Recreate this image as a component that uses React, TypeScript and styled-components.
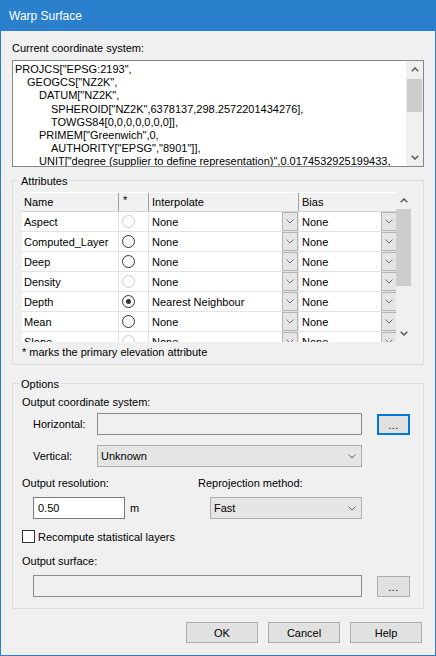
import React from "react";
import styled, { createGlobalStyle } from "styled-components";

const GlobalStyle = createGlobalStyle`
  * { box-sizing: border-box; }
  html, body { margin: 0; padding: 0; background: #f0f0f0; }
  body {
    font-family: "Liberation Sans", Arial, sans-serif;
    font-size: 11px;
    color: #000;
  }
`;

const Window = styled.div`
  width: 436px;
  height: 656px;
  background: #f0f0f0;
  border: 1px solid #2b80cd;
  border-top: none;
  display: flex;
  flex-direction: column;
  overflow: hidden;
`;

const TitleBar = styled.div`
  height: 31px;
  flex: none;
  background: #2b80cd;
  color: #fff;
  font-size: 12px;
  display: flex;
  align-items: center;
  padding-left: 8px;
`;

const Body = styled.div`
  padding: 0 11px;
  display: flex;
  flex-direction: column;
`;

const Label = styled.div<{ $mt?: number }>`
  line-height: 14px;
  height: 14px;
  margin-top: ${(p) => p.$mt ?? 0}px;
  white-space: nowrap;
`;

/* ---------- multi-line text box ---------- */
const TextBox = styled.div`
  margin-top: 5px;
  height: 107px;
  border: 1px solid #828790;
  background: #fff;
  display: flex;
`;

const TextLines = styled.div`
  flex: 1;
  padding: 2px 0 0 2px;
  line-height: 13.2px;
  overflow: hidden;
  white-space: nowrap;
`;

const TextLine = styled.div<{ $level: number }>`
  padding-left: ${(p) => p.$level * 12}px;
`;

const VScroll = styled.div<{ $w: number }>`
  width: ${(p) => p.$w}px;
  flex: none;
  background: #f0f0f0;
  display: flex;
  flex-direction: column;
`;

const ScrollArrow = styled.div`
  height: 17px;
  flex: none;
  display: flex;
  align-items: center;
  justify-content: center;
`;

const ScrollTrack = styled.div<{ $offset: number }>`
  flex: 1;
  padding-top: ${(p) => p.$offset}px;
  display: flex;
  flex-direction: column;
`;

const Thumb = styled.div<{ $h: number; $ml: number }>`
  height: ${(p) => p.$h}px;
  margin-left: ${(p) => p.$ml}px;
  width: 15px;
  background: #cdcdcd;
`;

/* ---------- group boxes ---------- */
const Group = styled.div<{ $mt: number; $pad: string }>`
  position: relative;
  margin-top: ${(p) => p.$mt}px;
  border: 1px solid #dcdcdc;
  padding: ${(p) => p.$pad};
  display: flex;
  flex-direction: column;
`;

const Caption = styled.span`
  position: absolute;
  top: -7px;
  left: 6px;
  padding: 0 2px;
  line-height: 14px;
  background: #f0f0f0;
`;

/* ---------- data grid ---------- */
const Grid = styled.div`
  display: flex;
  height: 150px;
`;

const Table = styled.div`
  width: 374px;
  overflow: hidden;
  background: #fff;
`;

const COLS = "97px 30px 150px 99px";

const HeaderRow = styled.div`
  display: grid;
  grid-template-columns: ${COLS};
  height: 20px;
  background: #f0f0f0;
  border-top: 1px solid #fff;
  border-bottom: 1px solid #d5d5d5;
`;

const HeaderCell = styled.div<{ $last?: boolean; $pad: number; $top?: boolean }>`
  border-right: 1px solid ${(p) => (p.$last ? "#ffffff" : "#a0a0a0")};
  padding-left: ${(p) => p.$pad}px;
  display: flex;
  align-items: ${(p) => (p.$top ? "flex-start" : "center")};
  padding-top: ${(p) => (p.$top ? 1 : 0)}px;
`;

const Row = styled.div`
  display: grid;
  grid-template-columns: ${COLS};
  height: 20px;
  flex: none;
`;

const Cell = styled.div<{ $pad: number }>`
  border-right: 1px solid #e3e3e3;
  border-bottom: 1px solid #e3e3e3;
  padding-left: ${(p) => p.$pad}px;
  display: flex;
  align-items: center;
  justify-content: space-between;
  white-space: nowrap;
  overflow: hidden;
`;

const CellDrop = styled.div`
  width: 16px;
  height: 100%;
  flex: none;
  border: 1px solid #b4b4b4;
  background: #e5e5e5;
  display: flex;
  align-items: center;
  justify-content: center;
`;

const Radio = styled.span<{ $disabled?: boolean; $checked?: boolean }>`
  width: 13px;
  height: 13px;
  border-radius: 50%;
  border: 1px solid ${(p) => (p.$disabled ? "#cccccc" : "#333333")};
  background: #fff;
  display: flex;
  align-items: center;
  justify-content: center;
  &::after {
    content: "";
    width: 5px;
    height: 5px;
    border-radius: 50%;
    background: #333;
    display: ${(p) => (p.$checked ? "block" : "none")};
  }
`;

/* ---------- form controls ---------- */
const FieldRow = styled.div<{ $mt: number; $indent: number }>`
  display: flex;
  align-items: center;
  margin-top: ${(p) => p.$mt}px;
  padding-left: ${(p) => p.$indent}px;
`;

const FieldLabel = styled.span`
  width: 64px;
  flex: none;
`;

const TextInput = styled.div<{ $w: number; $readonly?: boolean }>`
  width: ${(p) => p.$w}px;
  height: 22px;
  flex: none;
  border: 1px solid ${(p) => (p.$readonly ? "#8a8a8a" : "#7a7a7a")};
  background: ${(p) => (p.$readonly ? "#f0f0f0" : "#ffffff")};
  display: flex;
  align-items: center;
  padding-left: 4px;
`;

const Combo = styled.div<{ $w: number; $ml?: number }>`
  width: ${(p) => p.$w}px;
  height: 22px;
  flex: none;
  margin-left: ${(p) => p.$ml ?? 0}px;
  border: 1px solid #acacac;
  background: #e5e5e5;
  display: flex;
  align-items: center;
  justify-content: space-between;
  padding: 0 5px 0 3px;
`;

const DotsButton = styled.div<{ $focused?: boolean }>`
  width: 33px;
  height: 21px;
  flex: none;
  margin-left: 15px;
  border: ${(p) => (p.$focused ? "2px solid #0078d7" : "1px solid #adadad")};
  background: #e1e1e1;
  display: flex;
  align-items: center;
  justify-content: center;
  padding-top: 2px;
  letter-spacing: 0.5px;
`;

const TwoCols = styled.div`
  display: grid;
  grid-template-columns: 176px 1fr;
  margin-top: 9px;
`;

const Col = styled.div`
  display: flex;
  flex-direction: column;
`;

const Unit = styled.span`
  margin-left: 5px;
`;

const CheckRow = styled.label`
  display: flex;
  align-items: center;
  margin-top: 11px;
  height: 13px;
`;

const CheckBox = styled.span`
  width: 13px;
  height: 13px;
  border: 1px solid #333;
  background: #fff;
  margin-right: 3px;
`;

const ButtonBar = styled.div`
  display: flex;
  justify-content: flex-end;
  gap: 10px;
  margin-top: 13px;
  padding-right: 2px;
`;

const Button = styled.div`
  width: 72px;
  height: 21px;
  border: 1px solid #adadad;
  background: #e1e1e1;
  display: flex;
  align-items: center;
  justify-content: center;
`;

/* ---------- icons ---------- */
const ChevronDown = ({ color = "#606060" }: { color?: string }) => (
  <svg width="8" height="5" viewBox="0 0 8 5">
    <polyline points="0.5,0.5 4,4 7.5,0.5" fill="none" stroke={color} strokeWidth="1" />
  </svg>
);

const ScrollUp = () => (
  <svg width="8" height="5" viewBox="0 0 8 5">
    <polyline points="0.7,4.3 4,1 7.3,4.3" fill="none" stroke="#606060" strokeWidth="1.6" />
  </svg>
);

const ScrollDown = () => (
  <svg width="8" height="5" viewBox="0 0 8 5">
    <polyline points="0.7,0.7 4,4 7.3,0.7" fill="none" stroke="#606060" strokeWidth="1.6" />
  </svg>
);

/* ---------- data ---------- */
const wkt: [number, string][] = [
  [0, 'PROJCS["EPSG:2193",'],
  [1, 'GEOGCS["NZ2K",'],
  [2, 'DATUM["NZ2K",'],
  [3, 'SPHEROID["NZ2K",6378137,298.2572201434276],'],
  [3, "TOWGS84[0,0,0,0,0,0,0]],"],
  [2, 'PRIMEM["Greenwich",0,'],
  [3, 'AUTHORITY["EPSG","8901"]],'],
  [2, 'UNIT["degree (supplier to define representation)",0.0174532925199433,'],
];

type Attr = { name: string; state: "disabled" | "enabled" | "checked"; interp: string; bias: string };

const attrs: Attr[] = [
  { name: "Aspect", state: "disabled", interp: "None", bias: "None" },
  { name: "Computed_Layer", state: "enabled", interp: "None", bias: "None" },
  { name: "Deep", state: "enabled", interp: "None", bias: "None" },
  { name: "Density", state: "disabled", interp: "None", bias: "None" },
  { name: "Depth", state: "checked", interp: "Nearest Neighbour", bias: "None" },
  { name: "Mean", state: "enabled", interp: "None", bias: "None" },
  { name: "Slope", state: "disabled", interp: "None", bias: "None" },
];

export default function App() {
  return (
    <>
      <GlobalStyle />
      <Window>
        <TitleBar>Warp Surface</TitleBar>
        <Body>
          <Label $mt={10}>Current coordinate system:</Label>
          <TextBox>
            <TextLines>
              {wkt.map(([lvl, t], i) => (
                <TextLine key={i} $level={lvl}>
                  {t}
                </TextLine>
              ))}
            </TextLines>
            <VScroll $w={17}>
              <ScrollArrow>
                <ScrollUp />
              </ScrollArrow>
              <ScrollTrack $offset={1}>
                <Thumb $h={33} $ml={1} />
              </ScrollTrack>
              <ScrollArrow>
                <ScrollDown />
              </ScrollArrow>
            </VScroll>
          </TextBox>

          <Group $mt={13} $pad="11px 11px 5px 9px">
            <Caption>Attributes</Caption>
            <Grid>
              <Table>
                <HeaderRow>
                  <HeaderCell $pad={2}>Name</HeaderCell>
                  <HeaderCell $pad={4} $top>*</HeaderCell>
                  <HeaderCell $pad={3}>Interpolate</HeaderCell>
                  <HeaderCell $pad={3} $last>Bias</HeaderCell>
                </HeaderRow>
                {attrs.map((a) => (
                  <Row key={a.name}>
                    <Cell $pad={2}>{a.name}</Cell>
                    <Cell $pad={3}>
                      <Radio $disabled={a.state === "disabled"} $checked={a.state === "checked"} />
                    </Cell>
                    <Cell $pad={3}>
                      <span>{a.interp}</span>
                      <CellDrop>
                        <ChevronDown color="#707070" />
                      </CellDrop>
                    </Cell>
                    <Cell $pad={3}>
                      <span>{a.bias}</span>
                      <CellDrop>
                        <ChevronDown color="#707070" />
                      </CellDrop>
                    </Cell>
                  </Row>
                ))}
              </Table>
              <VScroll $w={16}>
                <ScrollArrow>
                  <ScrollUp />
                </ScrollArrow>
                <ScrollTrack $offset={0}>
                  <Thumb $h={77} $ml={0} />
                </ScrollTrack>
                <ScrollArrow>
                  <ScrollDown />
                </ScrollArrow>
              </VScroll>
            </Grid>
            <Label $mt={3}>* marks the primary elevation attribute</Label>
          </Group>

          <Group $mt={18} $pad="11px 11px 11px 9px">
            <Caption>Options</Caption>
            <Label>Output coordinate system:</Label>
            <FieldRow $mt={4} $indent={11}>
              <FieldLabel>Horizontal:</FieldLabel>
              <TextInput $w={265} $readonly />
              <DotsButton $focused>...</DotsButton>
            </FieldRow>
            <FieldRow $mt={10} $indent={11}>
              <FieldLabel>Vertical:</FieldLabel>
              <Combo $w={265}>
                <span>Unknown</span>
                <ChevronDown />
              </Combo>
            </FieldRow>
            <TwoCols>
              <Col>
                <Label>Output resolution:</Label>
                <FieldRow $mt={7} $indent={11}>
                  <TextInput $w={92}>0.50</TextInput>
                  <Unit>m</Unit>
                </FieldRow>
              </Col>
              <Col>
                <Label>Reprojection method:</Label>
                <FieldRow $mt={7} $indent={0}>
                  <Combo $w={152} $ml={12}>
                    <span>Fast</span>
                    <ChevronDown />
                  </Combo>
                </FieldRow>
              </Col>
            </TwoCols>
            <CheckRow>
              <CheckBox />
              Recompute statistical layers
            </CheckRow>
            <Label $mt={11}>Output surface:</Label>
            <FieldRow $mt={7} $indent={11}>
              <TextInput $w={329} $readonly />
              <DotsButton>...</DotsButton>
            </FieldRow>
          </Group>

          <ButtonBar>
            <Button>OK</Button>
            <Button>Cancel</Button>
            <Button>Help</Button>
          </ButtonBar>
        </Body>
      </Window>
    </>
  );
}
